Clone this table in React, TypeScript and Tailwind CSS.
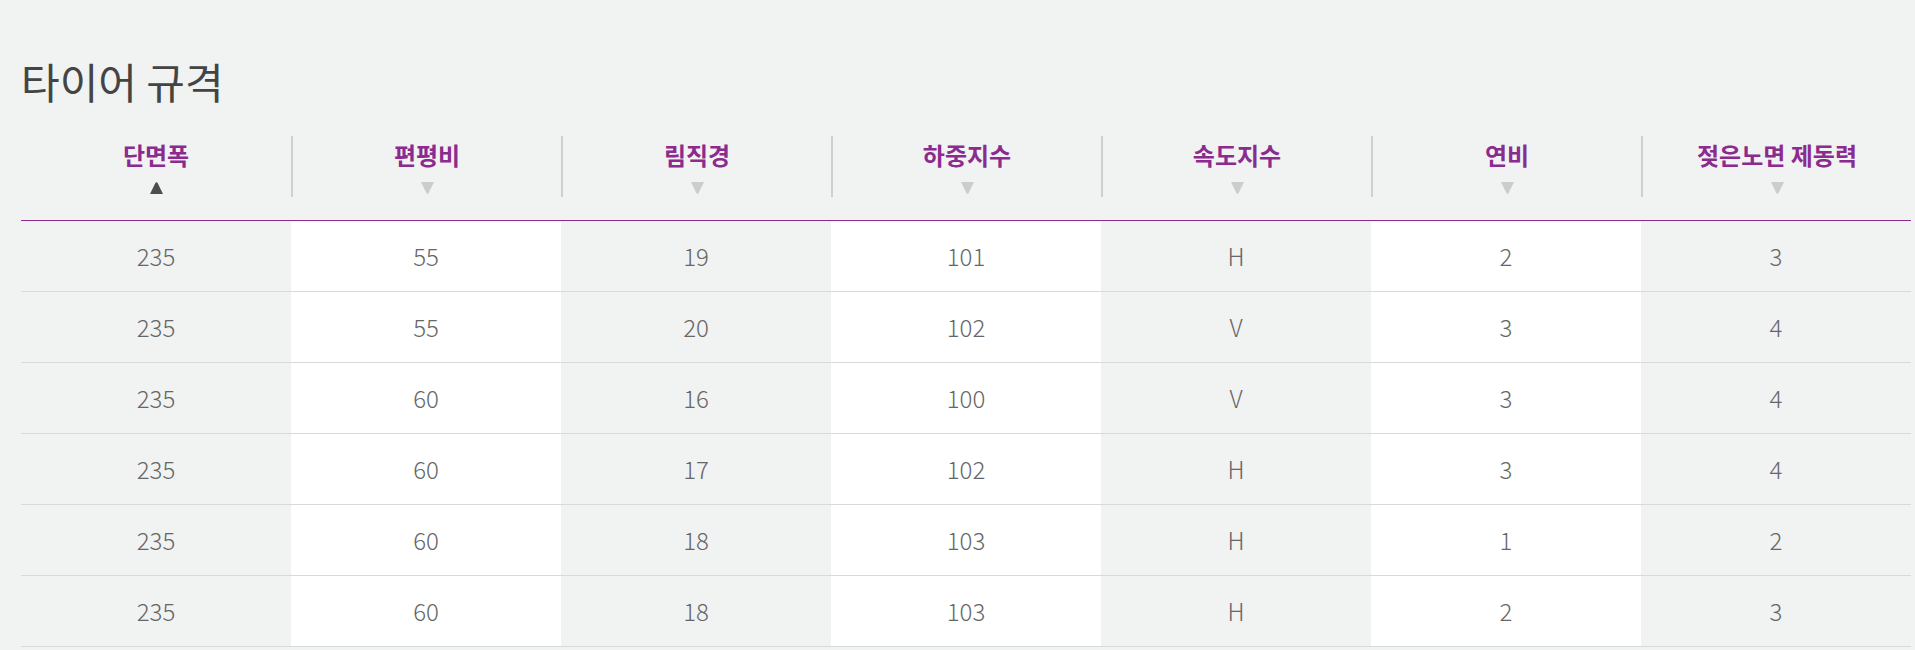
import React from 'react';

const columns = ['단면폭', '편평비', '림직경', '하중지수', '속도지수', '연비', '젖은노면 제동력'];

const rows = [
  ['235', '55', '19', '101', 'H', '2', '3'],
  ['235', '55', '20', '102', 'V', '3', '4'],
  ['235', '60', '16', '100', 'V', '3', '4'],
  ['235', '60', '17', '102', 'H', '3', '4'],
  ['235', '60', '18', '103', 'H', '1', '2'],
  ['235', '60', '18', '103', 'H', '2', '3'],
];

const SortArrow: React.FC<{ active?: boolean }> = ({ active }) => (
  <svg width="13" height="12" viewBox="0 0 13 12" className="block">
    {active ? (
      <path d="M5.5 0.8 Q6.5 -0.2 7.5 0.8 L13 12 L0 12 Z" fill="#4d4d4d" />
    ) : (
      <path d="M0 0 L13 0 L7.5 11.2 Q6.5 12.2 5.5 11.2 Z" fill="#cccccc" />
    )}
  </svg>
);

export default function App() {
  return (
    <div
      className="min-h-screen bg-[#f1f2f2] pl-[21px] pt-[56px]"
      style={{ fontFamily: '"Noto Sans CJK KR", "Noto Sans", sans-serif' }}
    >
      <h2 className="text-[42px] leading-[50px] font-normal text-[#444444]">타이어 규격</h2>

      <div className="mt-[30px] w-[1890px]">
        <div className="grid grid-cols-7 border-b border-[#8e2a92] pb-[23px]">
          {columns.map((col, i) => (
            <div
              key={col}
              className={`flex h-[61px] flex-col items-center pt-[4px] ${i > 0 ? 'border-l-2 border-[#cfcfcf]' : ''}`}
            >
              <span className="text-[24px] leading-[30px] font-bold text-[#8b2a8f]">{col}</span>
              <div className="mt-[12px]">
                <SortArrow active={i === 0} />
              </div>
            </div>
          ))}
        </div>

        {rows.map((row, r) => (
          <div key={r} className="grid grid-cols-7 border-b border-[#d9d9d9]">
            {row.map((cell, c) => (
              <div
                key={c}
                className={`flex h-[70px] items-center justify-center text-[24px] font-light text-[#666666] ${c % 2 === 1 ? 'bg-white' : ''}`}
              >
                {cell}
              </div>
            ))}
          </div>
        ))}
      </div>
    </div>
  );
}
